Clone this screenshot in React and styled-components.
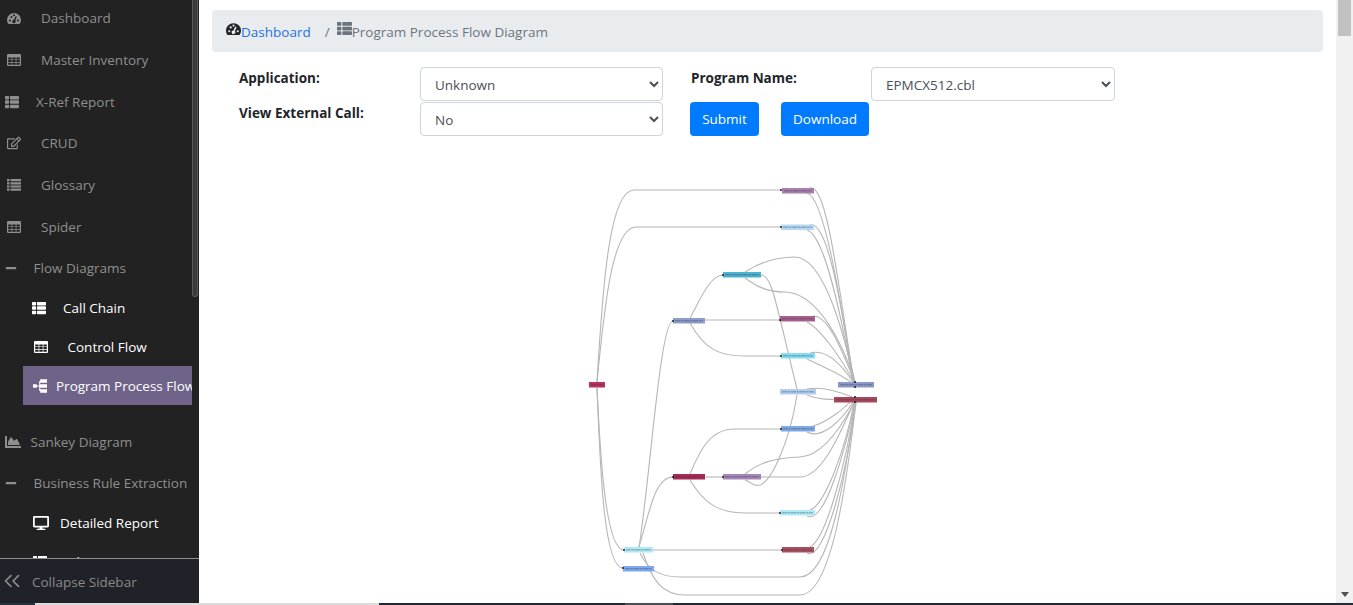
import React from 'react';
import styled, { createGlobalStyle } from 'styled-components';
import { FaThList, FaRegEdit, FaMinus, FaChartArea, FaDesktop } from 'react-icons/fa';
import { ChevronsLeft } from 'lucide-react';

const Global = createGlobalStyle`
  html, body { margin: 0; padding: 0; height: 100%; overflow: hidden; background: #fff; }
  body { font-family: "Open Sans", "Noto Sans", sans-serif; }
  * { box-sizing: border-box; }
`;

const Page = styled.div`
  width: 1353px;
  height: 605px;
  display: flex;
  flex-direction: column;
  overflow: hidden;
`;
const Body = styled.div`
  flex: 0 0 603px;
  display: flex;
  min-height: 0;
`;

/* sidebar */
const Sidebar = styled.aside`
  flex: 0 0 199px;
  display: flex;
  flex-direction: column;
  background: #222222;
`;
const SideBody = styled.div`
  flex: 0 0 558px;
  display: flex;
  overflow: hidden;
`;
const Nav = styled.nav`
  flex: 0 0 192px;
  margin-top: -2.4px;
  overflow: hidden;
`;
const SideThumb = styled.div`
  flex: 0 0 6px;
  height: 297px;
  background: #3c3c3c;
  border: 1px solid #5a5a5a;
  border-top: 0;
  border-radius: 0 0 3px 3px;
`;
const Item = styled.a`
  display: flex;
  align-items: center;
  height: ${p => (p.$sub ? '39px' : '41.67px')};
  margin-left: ${p => (p.$sub ? '23px' : '0')};
  margin-top: ${p => p.$top || 0}px;
  padding-left: ${p => p.$pad}px;
  font-size: 13.5px;
  white-space: nowrap;
  color: ${p => (p.$sub ? '#ffffff' : '#8f8f8f')};
  background: ${p => (p.$active ? '#6f6389' : 'transparent')};
`;
const ItemIcon = styled.span`
  flex: 0 0 ${p => p.$w}px;
  display: flex;
  align-items: center;
  font-size: ${p => p.$size || 14}px;
`;
const Collapse = styled.div`
  flex: 1;
  display: flex;
  align-items: center;
  padding-top: 2px;
  background: #1f2329;
  border-top: 1px solid #8d8d8d;
  color: #8a8a8a;
  font-size: 13.5px;
  svg { margin: -3px 7.5px 0 -1.5px; }
`;

/* main column */
const Main = styled.main`
  flex: 1;
  padding: 10px 13px 0;
  overflow: hidden;
  background: #fff;
`;
const Crumbs = styled.div`
  height: 42px;
  display: flex;
  align-items: center;
  padding: 2px 0 0 14px;
  background: #e9ecef;
  border-radius: 4px;
  font-size: 13.5px;
  color: #6c757d;
`;
const CrumbIcon = styled.span`
  display: flex;
  font-size: 15px;
  margin-top: -7px;
  color: ${p => (p.$dark ? '#212529' : '#6c757d')};
`;
const CrumbLink = styled.a`
  color: #1f72dc;
`;
const Slash = styled.span`
  margin: 0 7px 0 14px;
`;
const Form = styled.form`
  display: grid;
  grid-template-columns: 181px 243px 28px 180px 244px;
  grid-template-rows: 34px 34px;
  row-gap: 1px;
  margin: 15px 0 0 27px;
`;
const Label = styled.label`
  font-size: 13.5px;
  font-weight: 700;
  color: #212529;
  padding-top: 2px;
  grid-column: ${p => p.$col};
`;
const Select = styled.select`
  height: 34px;
  width: 100%;
  padding: 2px 10px 0;
  border: 1px solid #ced4da;
  border-radius: 4px;
  background: #fff;
  color: #495057;
  font-family: inherit;
  font-size: 13.5px;
  grid-column: ${p => p.$col};
`;
const Buttons = styled.div`
  grid-column: 4 / 6;
  margin-left: -1px;
  display: flex;
  gap: 22px;
`;
const Button = styled.button`
  height: 34px;
  width: ${p => p.$w}px;
  padding: 0;
  border: 0;
  border-radius: 4px;
  background: #007bff;
  color: #fff;
  font-family: inherit;
  font-size: 13.5px;
`;
const Diagram = styled.svg`
  display: block;
  margin: 39px 0 0 368px;
  overflow: visible;
  filter: blur(0.4px);
`;

const Track = styled.div`
  flex: 0 0 17px;
  display: flex;
  flex-direction: column;
  justify-content: space-between;
  align-items: center;
  background: #f1f1f1;
`;
const Thumb = styled.div`
  width: 13px;
  height: 36px;
  background: #c1c1c1;
`;
const DownArrow = styled.div`
  margin-bottom: 6px;
  width: 0;
  height: 0;
  border-left: 4px solid transparent;
  border-right: 4px solid transparent;
  border-top: 5px solid #505050;
`;

/* sliver of the window beneath, along the bottom edge */
const Strip = styled.div`
  flex: 0 0 2px;
  display: flex;
  background: #1f2a36;
`;
const StripPart = styled.div`
  flex: 0 0 ${p => p.$w}px;
  background: ${p => p.$c};
`;

// the Font Awesome 4 glyphs the page uses, package versions differ too much
const cellHoles = [1.2, 5.3, 9.4]
  .flatMap(x => [3.4, 6.1, 8.8].map(y => `M${x} ${y}h3.4v2h-3.4z`))
  .join('');

const TableIcon = () => (
  <svg width="1em" height="1em" viewBox="0 0 14 14" fill="currentColor">
    <path fillRule="evenodd" transform="translate(0 1)" d={`M1 0h12a1 1 0 0 1 1 1v10a1 1 0 0 1-1 1H1a1 1 0 0 1-1-1V1a1 1 0 0 1 1-1z${cellHoles}`} />
  </svg>
);

const ListIcon = () => (
  <svg width="1em" height="1em" viewBox="0 0 14 14" fill="currentColor">
    {[1, 4.2, 7.4, 10.6].map(y => (
      <path key={y} d={`M0 ${y}h2.6v2.2H0zM3.6 ${y}H14v2.2H3.6z`} />
    ))}
  </svg>
);

const GaugeIcon = () => (
  <svg width="1em" height="1em" viewBox="0 0 14 14" fill="currentColor">
    <path
      fillRule="evenodd"
      d="M1.4 13C.5 11.8 0 10.4 0 9a7 7 0 0 1 14 0c0 1.4-.5 2.8-1.4 4z
         M2 9.6a1 1 0 1 0 2 0a1 1 0 1 0-2 0z
         M3.4 6a1 1 0 1 0 2 0a1 1 0 1 0-2 0z
         M6 4.3a1 1 0 1 0 2 0a1 1 0 1 0-2 0z
         M10 9.6a1 1 0 1 0 2 0a1 1 0 1 0-2 0z
         M8.6 5.2l1.3.6-1.6 3.6a1.7 1.7 0 1 1-1.3-.6z"
    />
  </svg>
);

const TreeIcon = () => (
  <svg width="1em" height="1em" viewBox="0 0 14 14" fill="currentColor">
    <path d="M0 5.2h3.8v3.6H0zM3.8 6.5h3v1h-3zM6.2 2h1v10h-1zM7.2 .3H14v3.4H7.2zM7.2 5.3H14v3.4H7.2zM7.2 10.3H14v3.4H7.2z" />
  </svg>
);

const items = [
  { label: 'Dashboard', Icon: GaugeIcon, pad: 7, w: 34 },
  { label: 'Master Inventory', Icon: TableIcon, pad: 7, w: 34 },
  { label: 'X-Ref Report', Icon: FaThList, pad: 5, w: 31 },
  { label: 'CRUD', Icon: FaRegEdit, pad: 7, w: 34 },
  { label: 'Glossary', Icon: ListIcon, pad: 7, w: 34 },
  { label: 'Spider', Icon: TableIcon, pad: 7, w: 34 },
  { label: 'Flow Diagrams', Icon: FaMinus, pad: 5, w: 28.5, size: 12 },
  { label: 'Call Chain', Icon: FaThList, pad: 9, w: 31, sub: true, top: -1.1 },
  { label: 'Control Flow', Icon: TableIcon, pad: 11, w: 33.5, sub: true },
  { label: 'Program Process Flow', Icon: TreeIcon, pad: 10, w: 23, sub: true, active: true },
  { label: 'Sankey Diagram', Icon: FaChartArea, pad: 5, w: 25.5, size: 16, top: 16 },
  { label: 'Business Rule Extraction', Icon: FaMinus, pad: 5, w: 28.5, size: 12, top: -0.5 },
  { label: 'Detailed Report', Icon: FaDesktop, pad: 10, w: 27, size: 16, sub: true },
  { label: 'Rules', Icon: FaThList, pad: 10, w: 27, sub: true },
];

// x, y, width, height, fill — same coordinates as the page
const nodes = [
  [782, 188, 32, 5.5, '#a97fae'],
  [781, 224.5, 33, 5.5, '#b5d8f5'],
  [723, 272, 38, 5.5, '#4fb3cf'],
  [673, 318, 32, 5.5, '#8d9cc9'],
  [780, 316, 35, 5.5, '#a8608a'],
  [781, 353, 34, 5.5, '#86def0'],
  [780, 389, 36, 5.5, '#b3cdec'],
  [838, 382, 36, 5.5, '#8a98c8'],
  [589, 382, 16, 5.5, '#b8325f'],
  [834, 397, 43, 5.5, '#a8485f'],
  [781, 426, 34, 5.5, '#7fa8e8'],
  [673, 474, 32, 5.5, '#a82a58'],
  [723, 474, 38, 5.5, '#a885b8'],
  [780, 510, 35, 5.5, '#b0eaf5'],
  [624, 547, 29, 5.5, '#b0e8f5'],
  [782, 547, 32, 5.5, '#a8505f'],
  [623, 566, 31, 5.5, '#7fa8f0'],
];

const edges = [
  'M597 382C603 280 610 190 634 190L781 190',
  'M597 382C604 310 612 227 636 227L781 227',
  'M597 388C600 450 605 550 624 550',
  'M597 388C600 460 603 568 623 568',
  'M639 547C650 480 660 321 673 321',
  'M639 547C650 510 655 477 673 477',
  'M653 550L782 550',
  'M640 553C648 570 660 577 680 577L800 577C830 577 845 480 855 402',
  'M643 553C652 580 662 595 685 595L800 595C832 595 847 480 856 402',
  'M690 318C700 300 710 275 723 275',
  'M705 320L780 320',
  'M690 323C705 350 720 356 745 356L781 356',
  'M761 275C772 275 775 300 797 389',
  'M797 395C790 440 770 490 755 485C750 483 748 481 745 480',
  'M745 272C760 262 775 257 795 257C825 257 845 340 855 382',
  'M745 278C755 285 765 292 785 292C820 293 845 350 855 382',
  'M810 188C828 183 840 300 854 382',
  'M807 193C825 197 842 310 853 382',
  'M810 225C828 220 842 310 854 382',
  'M807 230C825 235 842 320 853 382',
  'M813 316C830 315 845 360 855 382',
  'M807 322C822 330 842 360 854 382',
  'M810 353C825 349 840 362 853 382',
  'M807 359C825 368 843 375 853 384',
  'M807 389C822 386 840 392 852 397',
  'M807 395C825 402 840 399 852 397',
  'M813 426C825 423 843 410 853 399',
  'M807 432C822 440 842 420 853 402',
  'M690 474C700 450 710 429 735 429L781 429',
  'M690 480C705 505 720 513 745 513L780 513',
  'M705 477L723 477',
  'M761 477L800 477C825 477 845 420 854 403',
  'M745 474C760 462 775 458 800 457C825 456 845 420 854 403',
  'M810 510C825 505 845 450 854 403',
  'M807 516C825 525 845 450 855 403',
  'M810 547C825 540 845 470 855 403',
  'M807 553C825 562 847 470 856 403',
];

const dots = [[855, 382], [855, 387], [855, 397], [855, 402], [781, 190], [781, 227], [723, 275], [673, 321], [780, 320], [781, 356], [781, 429], [723, 477], [673, 477], [780, 513], [624, 550], [623, 568], [782, 550]];

function App() {
  return (
    <Page>
      <Global />
      <Body>
        <Sidebar>
          <SideBody>
            <Nav>
              {items.map(({ label, Icon, pad, w, size, sub, active, top }) => (
                <Item key={label} $pad={pad} $sub={sub} $active={active} $top={top}>
                  <ItemIcon $w={w} $size={size}><Icon /></ItemIcon>
                  {label}
                </Item>
              ))}
            </Nav>
            <SideThumb />
          </SideBody>
          <Collapse><ChevronsLeft size={26} strokeWidth={1.6} />Collapse Sidebar</Collapse>
        </Sidebar>
        <Main>
          <Crumbs>
            <CrumbIcon $dark><GaugeIcon /></CrumbIcon>
            <CrumbLink>Dashboard</CrumbLink>
            <Slash>/</Slash>
            <CrumbIcon><FaThList /></CrumbIcon>
            Program Process Flow Diagram
          </Crumbs>
          <Form>
            <Label $col={1}>Application:</Label>
            <Select $col={2} defaultValue="Unknown"><option>Unknown</option></Select>
            <Label $col={4}>Program Name:</Label>
            <Select $col={5} defaultValue="EPMCX512.cbl"><option>EPMCX512.cbl</option></Select>
            <Label $col={1}>View External Call:</Label>
            <Select $col={2} defaultValue="No"><option>No</option></Select>
            <Buttons>
              <Button type="button" $w={69}>Submit</Button>
              <Button type="button" $w={88}>Download</Button>
            </Buttons>
          </Form>
          <Diagram width="310" height="430" viewBox="580 175 310 430">
            <g fill="none" stroke="#b6b6b6" strokeWidth="1.1">
              {edges.map(d => <path key={d} d={d} />)}
            </g>
            {nodes.map(([x, y, w, h, c]) => (
              <g key={`${x}-${y}`}>
                <rect x={x} y={y} width={w} height={h} fill={c} />
                <line x1={x + 2} x2={x + w - 2} y1={y + h / 2} y2={y + h / 2} stroke="#1d2a3a" strokeOpacity=".28" strokeWidth="1.6" strokeDasharray="5 .5 3 .5" />
              </g>
            ))}
            {dots.map(([x, y]) => <circle key={`${x}-${y}`} cx={x} cy={y} r="0.9" fill="#111" />)}
          </Diagram>
        </Main>
        <Track>
          <Thumb />
          <DownArrow />
        </Track>
      </Body>
      <Strip>
        <StripPart $w={35} $c="#22333f" />
        <StripPart $w={344} $c="#dcdcdc" />
        <StripPart $w={246} $c="#1f2a36" />
        <StripPart $w={48} $c="#4a4f58" />
      </Strip>
    </Page>
  );
}

export default App;
